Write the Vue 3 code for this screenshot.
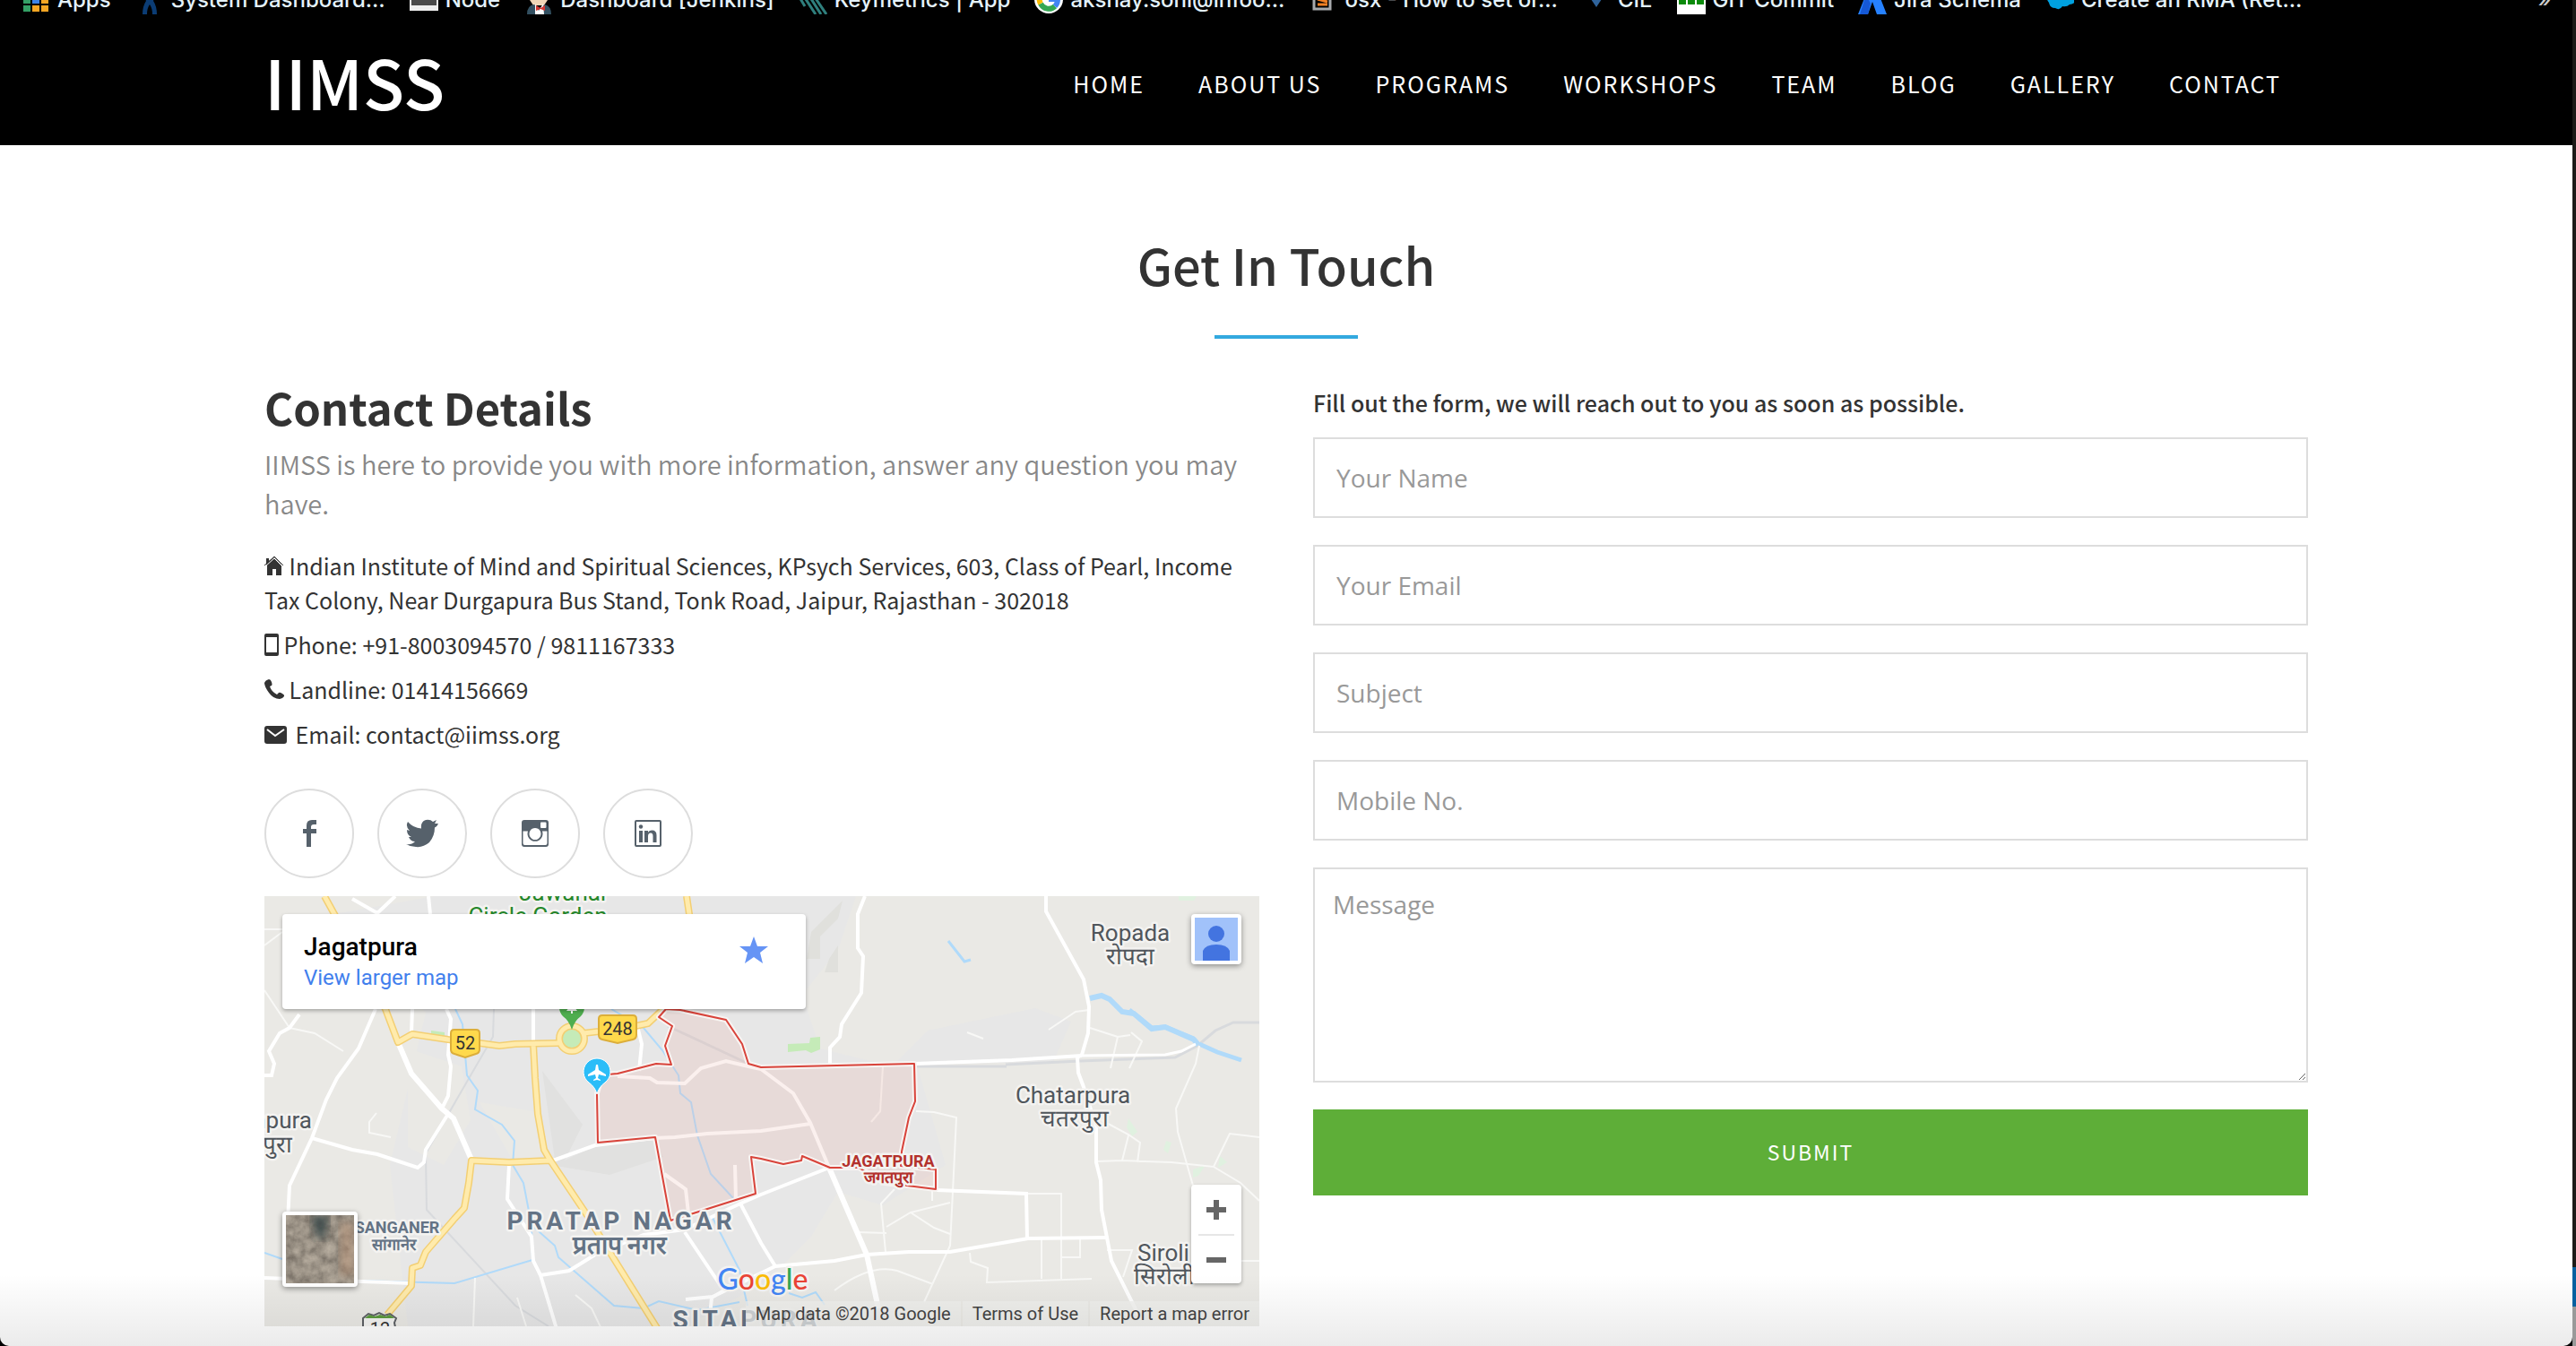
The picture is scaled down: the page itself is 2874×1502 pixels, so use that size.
<script setup>
import { ref } from 'vue'

const bookmarks = [
  { icon: 'apps', label: 'Apps' },
  { icon: 'xing', label: 'System Dashboard…' },
  { icon: 'node', label: 'Node' },
  { icon: 'jenkins', label: 'Dashboard [Jenkins]' },
  { icon: 'keymetrics', label: 'Keymetrics | App' },
  { icon: 'google', label: 'akshay.soni@infoo…' },
  { icon: 'stack', label: 'osx - How to set or…' },
  { icon: 'cie', label: 'CIE' },
  { icon: 'git', label: 'GIT Commit' },
  { icon: 'jira', label: 'Jira Schema' },
  { icon: 'cloud', label: 'Create an RMA (Ret…' },
]

const links = ['Home', 'About us', 'Programs', 'Workshops', 'Team', 'Blog', 'Gallery', 'Contact']

const fields = [
  { id: 'name', label: 'Your Name', type: 'text' },
  { id: 'email', label: 'Your Email', type: 'email' },
  { id: 'subject', label: 'Subject', type: 'text' },
  { id: 'mobile', label: 'Mobile No.', type: 'tel' },
]
const form = ref({ name: '', email: '', subject: '', mobile: '', message: '' })
</script>

<template>
  <div class="window">
    <div class="page">
      <header class="header">
        <div class="bookmarks">
          <a v-for="b in bookmarks" :key="b.label" href="#" class="bookmark" :class="b.icon">
            <svg class="favicon" viewBox="0 0 32 32" aria-hidden="true">
              <g v-if="b.icon === 'apps'">
                <path fill="#e8453c" d="M2 2h8v8H2z" /><path fill="#e8453c" d="M12 2h8v8h-8z" /><path fill="#f5a623" d="M22 2h8v8h-8z" />
                <path fill="#34a065" d="M2 12h8v8H2z" /><path fill="#3b82e6" d="M12 12h8v8h-8z" /><path fill="#f5a623" d="M22 12h8v8h-8z" />
                <path fill="#34a065" d="M2 22h8v7H2z" /><path fill="#f5a623" d="M12 22h8v7h-8zM22 22h8v7h-8z" />
              </g>
              <path v-else-if="b.icon === 'xing'" fill="#0b3c74" d="M6 2h6l4 9 4-9h6l-6 15q4 6 4 15h-5q0-7-3-11-3 4-3 11H8q0-9 4-15z" />
              <g v-else-if="b.icon === 'node'"><path fill="#eee" d="M0 0h32v28H0z" /><path fill="#4a4a4a" d="M2 2h28v20H2z" /></g>
              <g v-else-if="b.icon === 'jenkins'">
                <path fill="#f0d6b7" d="M6 0h20v16l-4 6H10l-4-6z" /><path fill="#335061" d="M3 32q0-10 8-11l6 4 6-4q7 2 7 11z" />
                <path fill="#fff" d="M12 20l4 8 5-8 1 12H12z" /><path fill="#d33833" d="M13 22l5 3 5-3v6l-5-2-5 2z" /><path fill="#8b1a1a" d="M14 13h6v2h-6z" />
              </g>
              <path v-else-if="b.icon === 'keymetrics'" fill="none" stroke="#2f7f7d" stroke-width="3" d="M1 13l6 10M4 9l15 23M9 7l16 25M14 7l17 25" />
              <g v-else-if="b.icon === 'google'" fill="none" stroke-width="6">
                <circle cx="16" cy="15" r="16" fill="#fff" /><path stroke="#34a853" d="M7 20a10 10 0 0 0 16 3" /><path stroke="#fbbc05" d="M8 9a10 10 0 0 0-1 11" /><path stroke="#4285f4" d="M16 15h10q0 5-3 8" />
              </g>
              <g v-else-if="b.icon === 'stack'"><path fill="none" stroke="#a7a9ac" stroke-width="3" d="M6 16v10h18V16" /><path stroke="#f48024" stroke-width="3" d="M10 21h11M10 15l11 3M13 8l9 6" /></g>
              <path v-else-if="b.icon === 'cie'" fill="#2f639b" d="M4 6h24L16 24z" />
              <g v-else-if="b.icon === 'git'"><path fill="#fff" d="M0 0h32v32H0z" /><path fill="#0b8a0b" d="M2 12h8v9H2zM12 12h8v9h-8zM22 12h8v9h-8z" /></g>
              <g v-else-if="b.icon === 'jira'"><path fill="#2681ff" d="M11 4h10l11 28H21L16 18 11 32H0z" /><path fill="#1558d6" d="M9 10l5 10-3 12H2z" /></g>
              <path v-else fill="#00a1e0" d="M2 8a9 9 0 0 1 12-6 9 9 0 0 1 13 3 8 8 0 0 1 0 16q-3 3-8 2-3 5-8 2-6 0-7-6-4-5-2-11z" />
            </svg>
            <span>{{ b.label }}</span>
          </a>
          <button type="button" class="more" aria-label="More bookmarks">»</button>
        </div>
        <div class="container navbar">
          <a href="#" class="logo">IIMSS</a>
          <nav class="nav">
            <a v-for="l in links" :key="l" href="#">{{ l }}</a>
          </nav>
        </div>
      </header>

      <main class="container main">
        <h1 class="title">Get In Touch</h1>
        <div class="columns">
          <section class="details">
            <h2>Contact Details</h2>
            <p class="lead">IIMSS is here to provide you with more information, answer any question you may have.</p>
            <p class="line">
              <svg width="22" height="22" viewBox="0 0 22 22" aria-hidden="true"><path fill="#333" d="M2 3h3v3l6-4 8 8v12h-6v-7H9v7H3V10H2z" /><path fill="none" stroke="#fff" stroke-width="1" d="M1 12L11 3l9 9" /><path fill="none" stroke="#333" stroke-width="1" d="M0 11L11 1l10 10" /></svg>
              Indian Institute of Mind and Spiritual Sciences, KPsych Services, 603, Class of Pearl, Income Tax Colony, Near Durgapura Bus Stand, Tonk Road, Jaipur, Rajasthan - 302018
            </p>
            <p class="line">
              <svg class="low" width="16" height="26" viewBox="0 0 16 26" aria-hidden="true"><path fill="#333" fill-rule="evenodd" d="M2 0h12a2 2 0 0 1 2 2v21a2 2 0 0 1-2 2H2a2 2 0 0 1-2-2V2a2 2 0 0 1 2-2zM2 4v17h12V4z" /></svg>
              Phone: +91-8003094570 / 9811167333
            </p>
            <p class="line">
              <svg width="22" height="24" viewBox="0 0 22 24" aria-hidden="true"><path fill="#333" d="M5 2q2 0 3 3 1 3 0 4l-2 1q2 6 8 9l2-2q1-1 4 1 3 2 2 3-2 3-5 3-7 0-12-7Q0 10 0 6 1 3 5 2z" /></svg>
              Landline: 01414156669
            </p>
            <p class="line">
              <svg class="mail" width="25" height="20" viewBox="0 0 25 20" aria-hidden="true"><rect width="25" height="20" rx="3" fill="#333" /><path fill="none" stroke="#fff" stroke-width="2" d="M3 4l9 7 10-7" /></svg>
              Email: contact@iimss.org
            </p>
            <div class="social">
              <a href="#" aria-label="Facebook"><svg viewBox="0 0 36 32"><path fill="#56616b" d="M15 31V16h-4v-5h4V7q0-6 6-6h5v5h-3q-3 0-3 3v2h6v5h-6v15z" /></svg></a>
              <a href="#" aria-label="Twitter"><svg viewBox="0 0 36 32"><path fill="#56616b" d="M36 5q-1 3-4 4.500Q32 19 26 26 19 32 11 31q-6 0-11-3 6 1 10-3-5 0-7-5h3Q1 18 1 12l3 1Q-1 8 2 3q6 7 15 7.500Q16 3 22 1q5-1 8 2l4-2-2 4z" /></svg></a>
              <a href="#" aria-label="Instagram"><svg viewBox="0 0 36 32"><path fill="#56616b" fill-rule="evenodd" d="M6 1h24a3 3 0 0 1 3 3v24a3 3 0 0 1-3 3H6a3 3 0 0 1-3-3V4a3 3 0 0 1 3-3zM25 3.500q-1 0-1 1V9q0 1 1 1h4.500q1 0 1-1V4.500q0-1-1-1zM4.500 13.500V27q0 2 2 2h23q2 0 2-2V13.500H26a8.500 8.500 0 1 1-16 0zM18 10a6.500 6.500 0 1 0 .01 0z" /></svg></a>
              <a href="#" aria-label="LinkedIn"><svg viewBox="0 0 36 32"><path fill="#56616b" fill-rule="evenodd" d="M5 1h26a2 2 0 0 1 2 2v26a2 2 0 0 1-2 2H5a2 2 0 0 1-2-2V3a2 2 0 0 1 2-2zM5 3v26h26V3z" /><circle cx="10" cy="8.500" r="2.200" fill="#56616b" /><path fill="#56616b" d="M8 13h4v13H8zM14 13h4v2q1-2.500 4.500-2.500 5 0 5 5.500v8h-4v-7q0-3.500-2.500-3.500-3 0-3 3.500v7h-4z" /></svg></a>
            </div>

            <div class="map">
              <svg class="canvas" viewBox="0 0 1110 480" preserveAspectRatio="xMidYMid slice" role="img" aria-label="Map of Jagatpura">
                <rect width="1110" height="480" fill="#eae9e5" />
                <path fill="#e7e7e7" d="M78 20L190 0H660L640 60 600 110 620 170 700 190 740 150 860 125 900 140 880 185 728 188 760 300 690 345 640 330 610 380 560 430 470 480H160L140 300 180 130z" />
                <path fill="#e1e1e0" d="M310 195l45 60-20 40 40-20 60-4 10 20-60 20-60-10z" />
                <path fill="#eae9e5" d="M160 170l60 20 10 60-30 50-40-20zM240 230l60 10 10 50-30 10zM40 370h80l-20 60H30z" />
                <path fill="#e0e0dc" d="M610 40l20-20 15-15-5 20-20 20v25h-15zM630 70l10-15v30h-15z" />
                <g fill="#c5ebb8"><path d="M584 165l24-1 1-6 11-1v14l-10 4-6-3-20 2z" /><path d="M186 150l15 2v4h-15z" /></g>
                <g fill="#e0f1e0"><path d="M1020 0h20l-3 5h-17zM964 248l10 15-6 5-6-10zM1006 273l6 2-4 12-5-4zM1036 305l14-5-8 12-6 2zM1066 290l8 7-10 6z" /></g>
                <g fill="none" stroke="#d8dadd" stroke-width="2">
                  <path d="M256 126l-1 31-29 50-46 80 1 63 99 107 37 23" /><path stroke-width="3" d="M827 188l83-4 106-4 25-13 20-17 20-9h29M728 190h100M450 145l90 42" />
                </g>
                <g fill="none" stroke="#b0dafa" stroke-width="2">
                  <path d="M213 126l8 17 5 57 12 17-3 21 30 17 14 18-2 27 12 20 9 47 26 23 4 13 62 54 33 3 17-8 43 10 47-9M105 429l107 3 87-26-1-33M0 398l20 7M387 126l36 21 21 25 18 28 2 20 12 10 7 37 15 43 25 27M499 357l31 60 9 40M585 443l15 5 15-6 10 14" />
                  <path stroke-width="3" d="M763 50l18 23 7-2" /><path stroke-width="6" d="M921 114l13-3 9 4 14 14 13 2 20 17 15-2 32 14 5 6" /><path stroke-width="5" d="M965 127l25 20 15-1 32 13M1043 165l20 9 27 9" />
                </g>
                <g fill="none" stroke="#f8f8f6" stroke-width="2">
                  <path d="M28 147l28 6 32 20M0 105l28 42M0 55l20-15M0 37h20M125 242l-8 10v12l24 5M1043 167l-4 20-22 50 2 26 17 60M928 296l29-1 55 2 47 5 18-37 33 4M1059 302l30 18 21 20M850 332h39v95M727 240l20 1 25 6-4 83-3 60-29 63M787 398l1 10 19 7-1 16 117-4M694 369l27-16 44-11M721 353l26 17 18 7M703 327l-15 16 5 54M663 375l31 1M867 383v44M910 383v20h-20M1090 407h20M940 395h28l-10 30M636 440q40-30 70-22l40 15M745 340v-12M921 147l31 10-8 35M952 157l14-2M967 152l12 10-14 30M920 127l-15 2-30 20M934 250l30 16 13 9-3 22M964 267l-7 28M784 152l18 7M690 190l-3 50-10 12M235 426l-2 54M282 448l10 32M347 445l18 15 12 25" />
                </g>
                <g fill="none" stroke="#fff" stroke-width="4">
                  <path d="M124 126l-19 44-24 33-12 24-16 43-25 53-2 40M53 270l45 13 28 5 45 15 7-6 2-14 25-40M39 132l-11 15-11 6-12 20 6 14-3 13H0M98 3l28 16 20-19M183 0l2 20M203 126l5 11-3 40 3 13-3 33-7 14M165 126l-1 27M0 426l164 6M273 300l-2 38 27 42 2 27 8 16 18 60M308 423l32-5 29-18 54-22 46-6 62-29 23-10 76-30 42 97 13 60M322 295l47-17 66-8M416 145l5 20-3 30M469 375l39 58 12 3-21 12-3 30M531 343l23 44 16 26M470 450l30-3 70-34 66-6 36-7 47-3h46l87-15 87-1" />
                  <path d="M670 0l-8 20v38l6 9-2 41-22 35-2 14-11 12v18M872 0v17l42 76 6 30-1 30-7 24-5 3 1 17 6 16 14 44v40l5 20 1 33 11 57 30 60M725 187l109-4 78-5M750 328l100 4 1 51M300 126v40" />
                  <path stroke-width="3" d="M912 178l93-1 18-4 16-8" />
                  <path stroke-width="6" d="M149 163l15 35 34 39 13 11 20 46M630 303l42 97 13 60" />
                </g>
                <g fill="none" stroke-linejoin="round">
                  <path stroke="#f3cf73" stroke-width="8" d="M67 0l11 20 57 106 14 37 16-9 40 6 35 4 22 3 18-2 48-1M356 153l17-2 41-6 14-3 18-17M471 0l3 20-5 90-23 15M300 165l2 38 3 40 7 40 7 12 39 58 29 47 53 85M319 295l-46 2-42-2-3 25-5 28-11 12-32 37-6 15-9 3-1 20-27 32" />
                  <circle cx="343" cy="159" r="14" fill="#c5ebb8" stroke="#f3cf73" stroke-width="8" /><circle cx="343" cy="159" r="14" stroke="#ffebac" stroke-width="5" />
                  <path stroke="#ffebac" stroke-width="5" d="M67 0l11 20 57 106 14 37 16-9 40 6 35 4 22 3 18-2 48-1M356 153l17-2 41-6 14-3 18-17M471 0l3 20-5 90-23 15M300 165l2 38 3 40 7 40 7 12 39 58 29 47 53 85M319 295l-46 2-42-2-3 25-5 28-11 12-32 37-6 15-9 3-1 20-27 32" />
                </g>
                <path fill="#eba9a2" fill-opacity=".2" stroke="#f8f4f2" stroke-width="6" stroke-linejoin="round" d="M448 126l-8 9 15 10-8 22 7 21-17-1-43 11-17 1-6 21 1 55 64-6 17 93 95-30-5-41 11 2 25 6 20-4 1-5 31 13h32l29 17 57 7v-22l-39-4 1-16 8-38 7-18-1-42-171 4-14-4-7-22-18-27-51-11z" />
                <path fill="none" stroke="#fbf0ee" stroke-width="4" d="M394 201l36 2 8 5 31 1 18-17 28-8 25 6 14 3 36 27 19 33 21 50M435 270l23-1 36-4 60-3 55-8M446 310l24 17 4 35M525 300l1 38" />
                <path fill="none" stroke="#d8433a" stroke-width="2" stroke-linejoin="round" d="M448 126l-8 9 15 10-8 22 7 21-17-1-43 11-23 2v22l1 53 64-6 17 93 95-30-5-41 11 2 25 6 20-4 1-5 31 13h32l29 17 57 7v-22l-39-4 1-16 8-38 7-18-1-42-171 4-14-4-7-22-18-27-51-11z" />

                <path fill="#ffd94c" stroke="#dcae3a" stroke-width="2" d="M212 149h24q4 0 4 4v18q0 4-4 5l-12 4-12-4q-4-1-4-5v-18q0-4 4-4zM377 133h34q4 0 4 4v18q0 4-4 5l-17 4-17-4q-4-1-4-5v-18q0-4 4-4z" />
                <path fill="#f3f3f1" stroke="#5c5f63" stroke-width="2" d="M110 471l6-5 6 2 6-3 6 3 6-2 7 5-2 5 2 10h-37z" /><path fill="#5b9a3d" d="M112 471l5-4 6 2 6-2 6 2 5-2 5 4z" />
                <g class="shield"><text x="224" y="171">52</text><text x="394" y="155">248</text><text x="129" y="490">12</text></g>
                <path fill="#4fae4f" d="M343 149q-3-10-10-15a14 14 0 1 1 20 0q-7 5-10 15z" /><path fill="#fff" d="M337 128l6-8 6 8h-5v3h-2v-3z" />
                <path fill="#2bbdf8" stroke="#fff" stroke-width="1" d="M371 221q-2-8-9-13a15 15 0 1 1 18 0q-7 5-9 13z" /><path fill="#fff" d="M370 188h2l1 6 8 5v2l-8-2-1 4 3 2v1l-4-1-4 1v-1l3-2-1-4-8 2v-2l8-5z" />

                <g class="place green"><text x="334" y="5">Jawahar</text><text x="305" y="31">Circle Garden</text></g>
                <g class="place">
                  <text class="end" x="53" y="259">npura</text><text class="end" x="31" y="286">पुरा</text>
                  <text x="902" y="231">Chatarpura</text><text x="904" y="257">चतरपुरा</text>
                  <text x="966" y="50">Ropada</text><text x="966" y="76">रोपदा</text>
                  <text x="1003" y="407">Siroli</text><text x="1004" y="433">सिरोली</text>
                </g>
                <g class="city"><text class="wide" x="398" y="372">PRATAP NAGAR</text><text x="396" y="399">प्रताप नगर</text><text class="wide" x="538" y="482">SITAPURA</text></g>
                <g class="town"><text x="148" y="376">SANGANER</text><text x="144" y="395">सांगानेर</text></g>
                <g class="town red"><text x="696" y="302">JAGATPURA</text><text x="696" y="320">जगतपुरा</text></g>
                <text class="google" x="556" y="439"><tspan fill="#4285f4">G</tspan><tspan fill="#ea4335">o</tspan><tspan fill="#fbbc05">o</tspan><tspan fill="#4285f4">g</tspan><tspan fill="#34a853">l</tspan><tspan fill="#ea4335">e</tspan></text>
              </svg>
              <div class="card">
                <div><strong>Jagatpura</strong><a href="#">View larger map</a></div>
                <svg width="32" height="30" viewBox="0 0 32 30" aria-hidden="true"><path fill="#6694f5" d="M16 0l4 11h12l-9 7 3 12-10-7-10 7 3-12-9-7h12z" /></svg>
              </div>
              <button type="button" class="profile" aria-label="Profile"><svg viewBox="0 0 48 48"><path fill="#a1c2fa" d="M0 0h48v48H0z" /><circle cx="24" cy="18" r="9" fill="#4374e0" /><path fill="#4374e0" d="M9 48V37q3-7 15-7t15 7v11z" /></svg></button>
              <button type="button" class="satellite" aria-label="Satellite view">
                <svg viewBox="0 0 76 76"><defs><filter id="ground"><feTurbulence type="fractalNoise" baseFrequency=".09" numOctaves="4" seed="4" /><feColorMatrix values=".4 0 0 0 .13  .36 0 0 0 .11  .3 0 0 0 .09  0 0 0 0 1" /></filter><filter id="soft"><feGaussianBlur stdDeviation="4" /></filter></defs><path filter="url(#ground)" d="M0 0h76v76H0z" /><path fill="#26383a" opacity=".8" filter="url(#soft)" d="M28 0h20l-5 27-9-2z" /><path fill="#b58f72" opacity=".5" filter="url(#soft)" d="M60 8h16v60H60z" /></svg>
              </button>
              <div class="zoom"><button type="button" aria-label="Zoom in"><svg viewBox="0 0 22 22"><path stroke="#666" stroke-width="6" d="M0 11h22M11 0v22" /></svg></button><button type="button" aria-label="Zoom out"><svg viewBox="0 0 22 22"><path stroke="#666" stroke-width="6" d="M0 11h22" /></svg></button></div>
              <div class="credits"><span>Map data ©2018 Google</span><a href="#">Terms of Use</a><a href="#">Report a map error</a></div>
            </div>
          </section>

          <form class="form" @submit.prevent>
            <h3>Fill out the form, we will reach out to you as soon as possible.</h3>
            <input v-for="f in fields" :id="f.id" :key="f.id" v-model="form[f.id]" :type="f.type" :placeholder="f.label" :aria-label="f.label" />
            <textarea id="message" v-model="form.message" placeholder="Message" aria-label="Message"></textarea>
            <button type="submit">Submit</button>
          </form>
        </div>
      </main>
      <div class="shade"></div>
    </div>
    <div class="edge"></div>
  </div>
</template>

<style>
body {
  background: #000;
}
</style>

<style scoped>
* {
  box-sizing: border-box;
}
a {
  color: inherit;
  text-decoration: none;
}
button {
  border: 0;
  padding: 0;
  font: inherit;
  cursor: pointer;
}
.window {
  display: flex;
  height: 100vh;
  overflow: hidden;
  background: #000;
  color: #333;
  font-family: "Noto Sans CJK SC", "Noto Sans", sans-serif;
}
.page {
  position: relative;
  flex: 1;
  min-width: 0;
  overflow: hidden;
  background: #fff;
  border-radius: 0 0 10px 10px;
}
.edge {
  width: 4px;
  background: linear-gradient(#1c1b18 1414px, #0560a0 1414px, #0560a0 1458px, #999 1458px);
}
.container {
  max-width: 2280px;
  margin: 0 auto;
}
.header {
  background: #000;
  color: #fff;
}
.bookmarks {
  display: flex;
  align-items: flex-end;
  gap: 27px;
  height: 16px;
  padding: 0 24px;
  font-family: Inter, Roboto, sans-serif;
  font-size: 24px;
  font-weight: 500;
  line-height: 32px;
}
.bookmark {
  display: flex;
  flex: none;
  gap: 8px;
  color: #e4f2fb;
}
.favicon {
  width: 32px;
  height: 32px;
}
.more {
  margin-left: auto;
  background: none;
  color: #ccc;
}
.navbar {
  display: flex;
  justify-content: space-between;
  height: 146px;
}
.logo {
  font-size: 76px;
  font-weight: 500;
  line-height: 148px;
}
.nav {
  display: flex;
  gap: 60px;
  padding-right: 30px;
  font-size: 25px;
  line-height: 154px;
  letter-spacing: 2px;
  text-transform: uppercase;
}
.title {
  display: flex;
  flex-direction: column;
  align-items: center;
  gap: 39px;
  margin: 0 0 40px;
  padding-top: 93px;
  font-size: 56px;
  font-weight: 500;
  line-height: 80px;
}
.title::after {
  content: "";
  width: 160px;
  height: 4px;
  background: #33a9df;
}
.columns {
  display: grid;
  grid-template-columns: 1fr 1fr;
  gap: 60px;
}
h2 {
  margin: 3px 0 8px;
  font-size: 49px;
  line-height: 66px;
}
.lead {
  margin: 0 0 29px;
  color: #888;
  font-size: 29px;
  font-weight: 350;
  line-height: 44px;
}
.line {
  margin: 0 0 12px;
  font-size: 25px;
  line-height: 38px;
}
.line svg.low {
  vertical-align: -3px;
}
.line svg.mail {
  margin-right: 4px;
}
.social {
  display: flex;
  gap: 26px;
  margin: 42px 0 20px;
}
.social a {
  display: flex;
  align-items: center;
  justify-content: center;
  width: 100px;
  height: 100px;
  border: 2px solid #ddd;
  border-radius: 50%;
}
.social svg {
  width: 36px;
  height: 32px;
}
.map {
  position: relative;
  height: 480px;
  font-family: Roboto, sans-serif;
}
.canvas {
  display: block;
  width: 100%;
  height: 100%;
}
.canvas text {
  text-anchor: middle;
  stroke: #f4f3f1;
  stroke-width: 5px;
  stroke-linejoin: round;
  paint-order: stroke;
}
.canvas .shield text {
  fill: #333;
  font-size: 20px;
  stroke: none;
}
.place text {
  fill: #50565c;
  font-size: 26px;
}
.canvas .place .end {
  text-anchor: end;
}
.place.green text {
  fill: #25872a;
}
.city text {
  fill: #647385;
  font-size: 28px;
  font-weight: 700;
}
.city .wide {
  letter-spacing: 4px;
}
.town text {
  fill: #647385;
  font-size: 18px;
  font-weight: 700;
}
.town.red text {
  fill: #b3312c;
}
.canvas .google {
  font-family: Lato, sans-serif;
  font-size: 32px;
  font-weight: 500;
}
.card {
  position: absolute;
  top: 20px;
  left: 20px;
  display: flex;
  align-items: flex-start;
  justify-content: space-between;
  width: 584px;
  height: 106px;
  padding: 19px 42px 0 24px;
  background: #fff;
  border-radius: 4px;
  box-shadow: 0 2px 4px rgba(0, 0, 0, 0.3);
}
.card strong,
.card a {
  display: block;
  line-height: 35px;
}
.card strong {
  color: #000;
  font-size: 28px;
  font-weight: 500;
}
.card a {
  color: #427fed;
  font-size: 24px;
}
.card svg {
  margin-top: 6px;
}
.profile,
.satellite {
  position: absolute;
  padding: 4px;
  background: #fff;
  border-radius: 4px;
  box-shadow: 0 2px 6px rgba(0, 0, 0, 0.4);
}
.profile svg,
.satellite svg {
  display: block;
  width: 100%;
}
.profile {
  top: 20px;
  right: 20px;
  width: 56px;
  height: 56px;
}
.satellite {
  bottom: 44px;
  left: 20px;
  width: 84px;
  height: 84px;
}
.zoom {
  position: absolute;
  right: 20px;
  bottom: 48px;
  width: 56px;
  background: #fff;
  border-radius: 4px;
  box-shadow: 0 2px 4px rgba(0, 0, 0, 0.3);
}
.zoom button {
  display: flex;
  align-items: center;
  justify-content: center;
  width: 40px;
  height: 55px;
  margin: 0 auto;
  background: none;
}
.zoom button + button {
  border-top: 2px solid #e6e6e6;
}
.zoom svg {
  width: 22px;
}
.credits {
  position: absolute;
  right: 0;
  bottom: 0;
  display: flex;
  gap: 2px;
  color: #444;
  font-size: 20px;
  line-height: 28px;
}
.credits > * {
  padding: 0 11px;
  background: rgba(240, 240, 238, 0.75);
}
.form {
  display: flex;
  flex-direction: column;
  gap: 30px;
}
.form h3 {
  margin: 11px 0 -11px;
  font-size: 25px;
  font-weight: 500;
  line-height: 40px;
}
.form input,
.form textarea {
  display: block;
  width: 100%;
  height: 90px;
  padding: 0 24px;
  border: 2px solid #ddd;
  background: #fff;
  font-family: "Open Sans", sans-serif;
  font-size: 28px;
  line-height: 40px;
}
.form textarea {
  height: 240px;
  padding: 19px 20px;
}
.form ::placeholder {
  color: #999;
  opacity: 1;
}
.form button {
  height: 96px;
  padding-bottom: 2px;
  background: #5eae38;
  color: #fff;
  font-size: 23px;
  letter-spacing: 2px;
  text-transform: uppercase;
}
.shade {
  position: absolute;
  inset: auto 0 0;
  height: 80px;
  background: linear-gradient(transparent, rgba(0, 0, 0, 0.08));
  pointer-events: none;
}
</style>
